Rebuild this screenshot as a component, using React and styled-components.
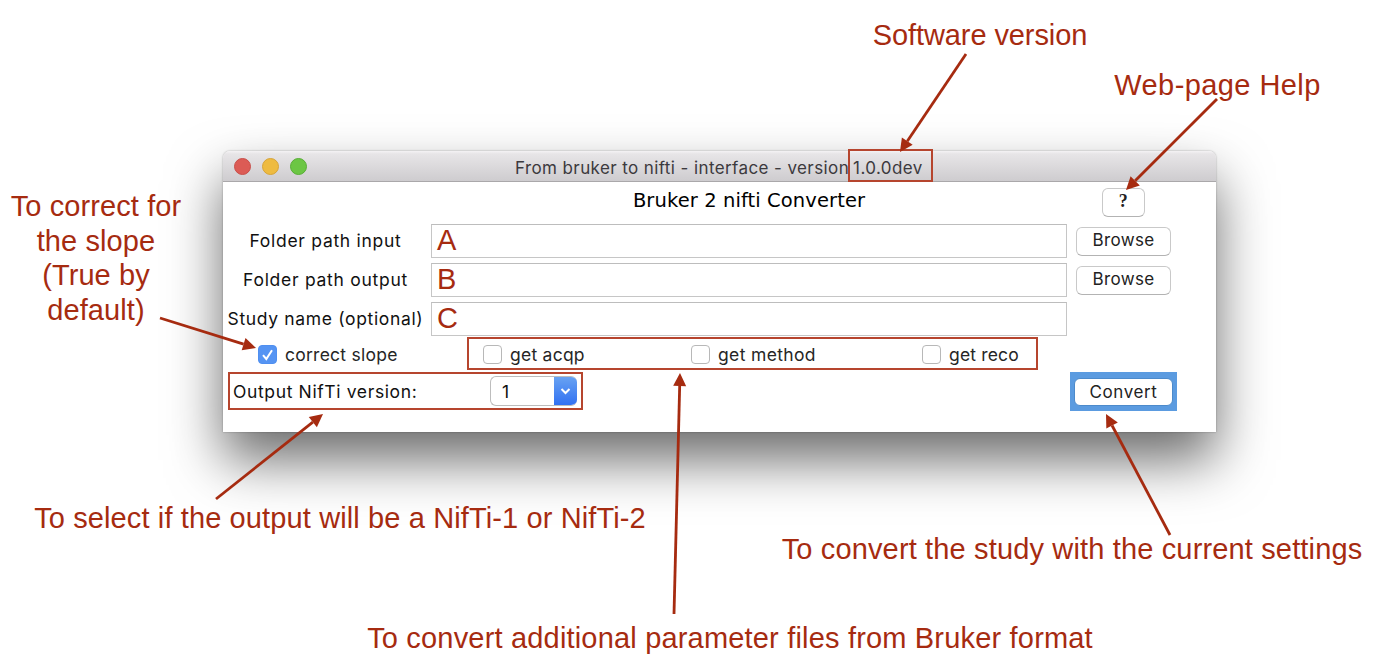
import React from "react";
import styled, { createGlobalStyle } from "styled-components";

const RED = "#a62b10";
const FRAME = "#b6452e";

const GlobalStyle = createGlobalStyle`
  body { margin: 0; background: #fff; overflow: hidden; }
  * { box-sizing: border-box; }
`;

const Canvas = styled.main`
  position: relative;
  width: 1399px;
  height: 672px;
  background: #fff;
`;

const Window = styled.section`
  position: absolute;
  left: 223px;
  top: 151px;
  width: 993px;
  height: 281px;
  background: #fff;
  border-radius: 7px 7px 0 0;
  box-shadow: 0 0 2px rgba(0, 0, 0, 0.35), 0 28px 54px rgba(0, 0, 0, 0.58);
  font-family: Inter, "Liberation Sans", sans-serif;
  font-size: 17.5px;
  color: #111;
`;

const TitleBar = styled.header`
  display: flex;
  align-items: center;
  height: 31px;
  padding: 1px 0 0 11px;
  border-radius: 7px 7px 0 0;
  border-bottom: 1px solid #aaa8aa;
  background: linear-gradient(#f4f2f4 0, #e7e5e7 3px, #cecccf 100%);
  font-size: 17px;
`;

const Light = styled.i`
  width: 17px;
  height: 17px;
  margin-right: 11px;
  border-radius: 50%;
  background: ${(p) => p.$fill};
  border: 1px solid ${(p) => p.$edge};
`;

const WindowTitle = styled.span`
  margin: 2px 0 0 197px;
  color: #3c3a3e;
  letter-spacing: 0.4px;
  white-space: pre;
`;

const Version = styled.span`
  margin: 2px 0 0 4px;
  color: #3c3a3e;
  letter-spacing: 0.4px;
`;

const Row = styled.div`
  display: grid;
  grid-template-columns: 208px 636px 113px;
  align-items: center;
  height: 39px;
`;

const Label = styled.label`
  padding-right: 3px;
  text-align: center;
  white-space: nowrap;
  letter-spacing: ${(p) => p.$spacing}px;
`;

const Heading = styled.h1`
  grid-column: 2;
  margin: -2px 0 0;
  text-align: center;
  font: 400 19.5px "DejaVu Sans", sans-serif;
  letter-spacing: 0.1px;
  color: #000;
`;

const Field = styled.div`
  display: flex;
  align-items: center;
  height: 34px;
  padding-left: 5px;
  border: 1px solid #c6c6c6;
  border-top-color: #bdbdbd;
  font: 29px "Liberation Sans", sans-serif;
  color: ${RED};
`;

const Button = styled.button`
  justify-self: center;
  width: ${(p) => p.$width || 95}px;
  height: 29px;
  margin-top: 1px;
  padding: 0 0 2px;
  border: 1px solid #c9c9c9;
  border-bottom-color: #b3b3b3;
  border-radius: 6px;
  background: #fff;
  color: #222;
  font: 17px Inter, sans-serif;
  letter-spacing: 0.35px;
`;

const HelpButton = styled(Button)`
  font: 700 18px "Liberation Serif", serif;
`;

const FocusRing = styled.div`
  justify-self: center;
  display: flex;
  padding: 6px 4px 5px;
  background: #5b9be0;
`;

const ConvertButton = styled(Button)`
  height: 28px;
  margin-top: 0;
  padding-bottom: 1px;
  border-color: #4c8acb;
  letter-spacing: 0.6px;
`;

const OptionRow = styled.div`
  display: flex;
  align-items: center;
  height: 34px;
  padding: 0 0 2px 35px;
`;

const Option = styled.label`
  display: flex;
  align-items: center;
  gap: 8px;
  width: ${(p) => p.$width}px;
  letter-spacing: ${(p) => p.$spacing}px;
  white-space: nowrap;
  color: #262626;
`;

const Box = styled.span`
  display: flex;
  flex: none;
  width: 19px;
  height: 19px;
  border-radius: 4px;
  border: 1px solid ${(p) => (p.$on ? "#4f8ff0" : "#b8b8b8")};
  background: ${(p) => (p.$on ? "#5594f3" : "#fff")};
`;

const OptionFrame = styled.div`
  display: flex;
  align-items: center;
  flex: none;
  width: 571px;
  height: 33px;
  margin-top: -1px;
  padding: 1px 0 0 14px;
  border: 2px solid ${FRAME};
`;

const BottomRow = styled.div`
  display: grid;
  grid-template-columns: 844px 113px;
  align-items: center;
  height: 39px;
`;

const OutputFrame = styled.div`
  display: flex;
  align-items: center;
  justify-content: space-between;
  width: 355px;
  height: 38px;
  margin: -1px 0 0 5px;
  padding: 1px 4px 0 3px;
  border: 2px solid ${FRAME};
`;

const Select = styled.div`
  display: flex;
  justify-content: space-between;
  align-items: center;
  width: 87px;
  height: 30px;
  margin-bottom: 1px;
  padding-left: 11px;
  border: 1px solid #bdbdbd;
  border-right: 0;
  border-radius: 6px;
  overflow: hidden;
`;

const SelectArrow = styled.span`
  display: flex;
  align-items: center;
  justify-content: center;
  width: 23px;
  height: 30px;
  background: linear-gradient(#6aa4f2, #2f6ff2);
`;

const VersionFrame = styled.div`
  position: absolute;
  left: 848px;
  top: 149px;
  width: 85px;
  height: 33px;
  border: 2px solid ${FRAME};
`;

const Note = styled.p`
  position: absolute;
  left: ${(p) => p.$x}px;
  top: ${(p) => p.$y}px;
  width: ${(p) => p.$width}px;
  margin: 0;
  text-align: center;
  white-space: pre;
  font: 29px/34.7px "Liberation Sans", sans-serif;
  letter-spacing: ${(p) => p.$spacing || 0}px;
  color: ${RED};
`;

const Arrows = styled.svg`
  position: absolute;
  inset: 0;
`;

function Arrow({ from, to }) {
  const [x1, y1] = from;
  const [x2, y2] = to;
  const len = Math.hypot(x2 - x1, y2 - y1);
  const ux = (x2 - x1) / len;
  const uy = (y2 - y1) / len;
  const bx = x2 - ux * 13;
  const by = y2 - uy * 13;
  return (
    <g>
      <line x1={x1} y1={y1} x2={bx} y2={by} stroke={RED} strokeWidth="2.8" />
      <polygon
        fill={RED}
        points={`${x2},${y2} ${bx - uy * 6.5},${by + ux * 6.5} ${bx + uy * 6.5},${by - ux * 6.5}`}
      />
    </g>
  );
}

export default function App() {
  return (
    <Canvas>
      <GlobalStyle />
      <Window>
        <TitleBar>
          <Light $fill="#dc5b55" $edge="#c94f4a" />
          <Light $fill="#eebb41" $edge="#d7a439" />
          <Light $fill="#6cc644" $edge="#58ae36" />
          <WindowTitle>From bruker to nifti - interface - version</WindowTitle>
          <Version>1.0.0dev</Version>
        </TitleBar>
        <Row>
          <Heading>Bruker 2 nifti Converter</Heading>
          <HelpButton $width={43}>?</HelpButton>
        </Row>
        <Row>
          <Label $spacing={0.72}>Folder path input</Label>
          <Field>A</Field>
          <Button>Browse</Button>
        </Row>
        <Row>
          <Label $spacing={0.72}>Folder path output</Label>
          <Field>B</Field>
          <Button>Browse</Button>
        </Row>
        <Row>
          <Label $spacing={0.65}>Study name (optional)</Label>
          <Field>C</Field>
        </Row>
        <OptionRow>
          <Option $width={209} $spacing={0.25}>
            <Box $on>
              <svg width="17" height="17" viewBox="0 0 17 17" fill="none" stroke="#fff" strokeWidth="2">
                <path d="M4 9.2 7.3 13 13 4.2" />
              </svg>
            </Box>
            correct slope
          </Option>
          <OptionFrame>
            <Option $width={208} $spacing={0.25}><Box />get acqp</Option>
            <Option $width={231} $spacing={0.35}><Box />get method</Option>
            <Option $width={100} $spacing={0.15}><Box />get reco</Option>
          </OptionFrame>
        </OptionRow>
        <BottomRow>
          <OutputFrame>
            <Label $spacing={0.63}>Output NifTi version:</Label>
            <Select>
              1
              <SelectArrow>
                <svg width="11" height="8" viewBox="0 0 11 8" fill="none" stroke="#fff" strokeWidth="2">
                  <path d="M1.5 2 5.5 6 9.5 2" />
                </svg>
              </SelectArrow>
            </Select>
          </OutputFrame>
          <FocusRing><ConvertButton $width={99}>Convert</ConvertButton></FocusRing>
        </BottomRow>
      </Window>
      <VersionFrame />
      <Note $x={872} $y={18} $width={216} $spacing={-0.1}>Software version</Note>
      <Note $x={1112} $y={68} $width={211} $spacing={0.42}>Web-page Help</Note>
      <Note $x={6} $y={189} $width={180} $spacing={0.1}>{"To correct for\nthe slope\n(True by\ndefault)"}</Note>
      <Note $x={30} $y={501} $width={620} $spacing={0.12}>To select if the output will be a NifTi-1 or NifTi-2</Note>
      <Note $x={777} $y={532} $width={590} $spacing={0.15}>To convert the study with the current settings</Note>
      <Note $x={364} $y={621} $width={732} $spacing={0.18}>To convert additional parameter files from Bruker format</Note>
      <Arrows width="1399" height="672">
        <Arrow from={[966, 54]} to={[900, 152]} />
        <Arrow from={[1217, 99]} to={[1126, 190]} />
        <Arrow from={[160, 318]} to={[256, 348]} />
        <Arrow from={[216, 499]} to={[323, 414]} />
        <Arrow from={[674, 614]} to={[680, 373]} />
        <Arrow from={[1170, 535]} to={[1106, 414]} />
      </Arrows>
    </Canvas>
  );
}
